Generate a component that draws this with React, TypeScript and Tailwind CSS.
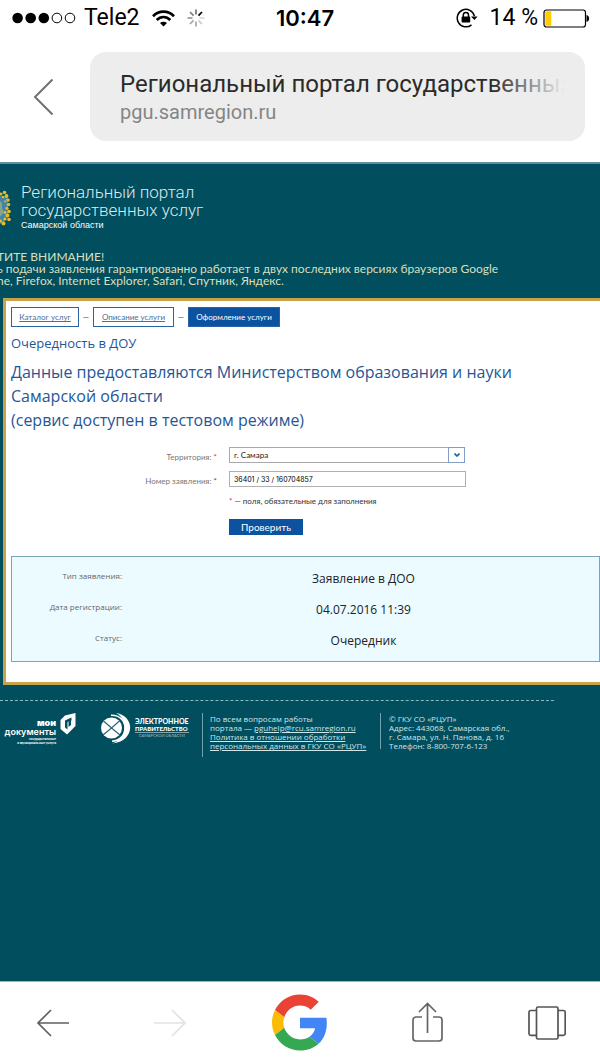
import { useState } from "react";

const STEPS = [
  { label: "Каталог услуг", width: "w-[68px]", current: false },
  { label: "Описание услуги", width: "w-[81px]", current: false },
  { label: "Оформление услуги", width: "w-[92px]", current: true },
];

const RESULT = [
  { label: "Тип заявления:", value: "Заявление в ДОО" },
  { label: "Дата регистрации:", value: "04.07.2016 11:39" },
  { label: "Статус:", value: "Очередник" },
];

const SPOKES = [
  { angle: 0, opacity: 0.55 }, { angle: 45, opacity: 1 }, { angle: 90, opacity: 0.15 }, { angle: 135, opacity: 0.2 },
  { angle: 180, opacity: 0.35 }, { angle: 225, opacity: 0.35 }, { angle: 270, opacity: 0.4 }, { angle: 315, opacity: 0.5 },
];

function StatusBar() {
  return (
    <div className="grid h-9 grid-cols-[1fr_auto_1fr] items-center pl-3 pr-[10px] font-['Inter',sans-serif] text-[22px] leading-9 text-black">
      <div className="flex items-center">
        <svg width="64" height="12" viewBox="0 0 64 12">
          {[0, 1, 2, 3, 4].map(i => (
            <circle key={i} cx={5.6 + i * 13.1} cy="6" r={i < 3 ? 5.3 : 4.8} fill={i < 3 ? "#000" : "none"} stroke={i < 3 ? "none" : "#000"} strokeWidth="1" />
          ))}
        </svg>
        <span className="ml-2 font-['Roboto',sans-serif] text-[23px]">Tele2</span>
        <svg className="ml-3" width="23" height="17" viewBox="0 0 23 17" fill="none" stroke="#000" strokeWidth="2.7">
          <path d="M1 6.2C7 .2 16 .2 22 6.2" />
          <path d="M4.7 10C8.700 6 14.300 6 18.300 10" />
          <path d="M11.500 16.500L8 13c2-1.800 5-1.800 7 0z" fill="#000" stroke="none" />
        </svg>
        <svg className="ml-3" width="18" height="18" viewBox="0 0 18 18" stroke="#000" strokeWidth="1.7">
          {SPOKES.map(s => (
            <line key={s.angle} x1="9" y1="0.5" x2="9" y2="5.5" opacity={s.opacity} transform={`rotate(${s.angle} 9 9)`} />
          ))}
        </svg>
      </div>
      <span className="pl-2 font-semibold">10:47</span>
      <div className="flex items-center justify-end">
        <svg width="22" height="20" viewBox="0 0 22 20" fill="none" stroke="#000" strokeWidth="1.5">
          <path d="M15.500 16.800A8.700 8.700 0 1 1 18.400 8" />
          <path d="M15 8.500h6.600L18.400 12z" fill="#000" stroke="none" />
          <rect x="5.600" y="8.600" width="8.600" height="6" rx="0.8" fill="#000" stroke="none" />
          <path d="M7.300 9V7a2.600 2.600 0 0 1 5.200 0v2" />
        </svg>
        <span className="ml-3 font-['Roboto',sans-serif] text-[23px]">14 %</span>
        <svg className="ml-1" width="48" height="19" viewBox="0 0 48 19">
          <rect x="2" y="1" width="41.500" height="17" rx="2.500" fill="none" stroke="#000" strokeWidth="1.200" />
          <path d="M44.500 6c3.500.6 3.500 6.400 0 7z" fill="#000" />
          <rect x="3.300" y="2.300" width="6" height="14.400" rx="1" fill="#fc0" />
        </svg>
      </div>
    </div>
  );
}

function AddressBar() {
  return (
    <div className="flex items-center pb-[21px] pl-8 pr-[15px] pt-4">
      <button aria-label="Назад" className="mr-9">
        <svg width="22" height="38" viewBox="0 0 22 38" fill="none" stroke="#707070" strokeWidth="2">
          <path d="M20.500 1.500L3 19l17.500 17.500" />
        </svg>
      </button>
      <div className="h-[89px] min-w-0 flex-1 rounded-2xl bg-[#ededed] pl-[30px] pr-5 pt-4 font-['Roboto',sans-serif]">
        <div className="relative overflow-hidden whitespace-nowrap text-2xl leading-8 text-[#2b2b2b]">
          Региональный портал государственных
          <div className="absolute inset-y-0 right-0 w-[72px] bg-linear-to-r from-[#ededed]/0 to-[#ededed]" />
        </div>
        <div className="text-xl leading-6 text-[#858585]">pgu.samregion.ru</div>
      </div>
    </div>
  );
}

function SiteHeader() {
  return (
    <header className="pt-[19px]">
      <div className="flex items-start">
        <svg className="mt-[7px]" width="11" height="37" viewBox="0 0 11 37">
          <path d="M0 6h4l4 3v18l-4 5-4 2z" fill="#3f86a5" />
          <path d="M0 11l2 2v5l2 4-4 5z" fill="#8aa18a" />
          <g fill="#e5bb32">
            <circle cx="4.500" cy="2.500" r="1.800" /><circle cx="6.500" cy="6" r="1.900" /><circle cx="3" cy="7" r="1.300" />
            <circle cx="8" cy="10" r="1.800" /><circle cx="5" cy="11.500" r="1" /><circle cx="8.500" cy="14.500" r="1.800" />
            <circle cx="7" cy="18.500" r="1.700" /><circle cx="9" cy="21.500" r="1.800" /><circle cx="5" cy="22.500" r="1.400" />
            <circle cx="7.500" cy="25.500" r="1.900" /><circle cx="9" cy="29.500" r="1.800" /><circle cx="5" cy="29" r="1.600" />
            <circle cx="3.500" cy="33.500" r="2" /><circle cx="0.500" cy="31" r="1.600" /><circle cx="1" cy="4" r="1.500" />
          </g>
          <path d="M7 12.500l1 1M6 20l2 .5M6 27.500l1.500 1M8 8l1 .5" stroke="#8a5a1c" strokeWidth=".8" />
        </svg>
        <a href="#" className="ml-[10px] block text-[#dcebed]">
          <span className="block font-['Roboto',sans-serif] text-[17px] font-light leading-[18px]">Региональный портал<br />государственных услуг</span>
          <span className="block font-['Liberation_Sans',sans-serif] text-[9px] leading-3 text-white">Самарской области</span>
        </a>
      </div>
      <p className="-ml-[3px] mt-5 whitespace-nowrap font-['Lato','Noto_Sans',sans-serif] text-xs leading-3 text-[#d9dfbd]">
        ТИТЕ ВНИМАНИЕ!<br />
        ь подачи заявления гарантированно работает в двух последних версиях браузеров Google<br />
        ne, Firefox, Internet Explorer, Safari, Спутник, Яндекс.
      </p>
    </header>
  );
}

function RequestForm() {
  const [territory, setTerritory] = useState("samara");
  const [num, setNum] = useState("36401 / 33 / 160704857");
  return (
    <form className="mt-[15px] font-['Lato','Noto_Sans',sans-serif] text-[8px]" onSubmit={e => e.preventDefault()}>
      <div className="grid grid-cols-[206px_237px] gap-x-3 gap-y-2">
        <label htmlFor="territory" className="pt-1 text-right leading-3 text-[#777]">Территория: <span className="text-[#d33]">*</span></label>
        <div className="relative h-4">
          <select id="territory" value={territory} onChange={e => setTerritory(e.target.value)}
            className="block h-4 w-[236px] appearance-none border border-[#a9a9a9] bg-white pl-1 text-[8px] leading-3 text-[#222]">
            <option value="samara">г. Самара</option>
          </select>
          <span className="pointer-events-none absolute right-px top-0 flex h-4 w-[17px] items-center justify-center border border-[#7f9fc6] bg-white">
            <svg width="6" height="4" viewBox="0 0 6 4" fill="none" stroke="#17609b" strokeWidth="1.600"><path d="M.5.5L3 3 5.500.5" /></svg>
          </span>
        </div>
        <label htmlFor="num" className="pt-1 text-right leading-3 text-[#777]">Номер заявления: <span className="text-[#833]">*</span></label>
        <input id="num" value={num} onChange={e => setNum(e.target.value)}
          className="h-4 border border-[#b0b0b0] bg-white pl-1 font-['Inter',sans-serif] text-[7px] text-black" />
      </div>
      <div className="ml-[218px]">
        <p className="mt-2 leading-3 text-[#333]"><span className="text-[#d33]">*</span> — поля, обязательные для заполнения</p>
        <button className="mt-3 block h-4 w-[74px] bg-[#0b52a0] text-[10px] leading-4 text-white">Проверить</button>
      </div>
    </form>
  );
}

function SiteFooter() {
  return (
    <footer className="mt-[15px] font-['Open_Sans',sans-serif] text-[8px] leading-[9px] text-[#cfe6ea]">
      <div className="mr-[46px] border-t border-dashed border-[#8fb9c0]" />
      <div className="flex items-start pt-3">
        <a href="#" className="flex w-[100px] shrink-0 items-start pl-[2px] text-white">
          <span className="w-[54px] pt-[6px] text-right font-['Inter',sans-serif]">
            <span className="block text-[9px] font-black leading-[8px]">мои</span>
            <span className="block text-[9px] font-semibold leading-[9px]">документы</span>
            <span className="mt-px block whitespace-nowrap text-[3px] font-bold leading-[4px]">государственные<br />и муниципальные услуги</span>
          </span>
          <svg className="ml-1" width="16" height="22" viewBox="0 0 16 22">
            <path fillRule="evenodd" d="M5 2.500L15.500 0v13L7 21.500.5 16V7zM5 7.500v7l2.500 2V9l4-1.500V4.500z" fill="#fff" />
            <path d="M8.500 6.500l2.500-1v6.500l-2.500 2z" fill="#004e5e" />
          </svg>
        </a>
        <a href="#" className="flex w-[102px] shrink-0 items-start text-white">
          <svg width="33" height="31" viewBox="0 0 33 31" fill="none">
            <circle cx="11.500" cy="15" r="10.500" fill="#fff" />
            <path d="M3.500 8l8 7 8-7M3 22l8.500-7 8.500 7" stroke="#2b6572" strokeWidth="1.200" />
            <path d="M11 2.300C20 2 25 8 25 15s-5 13-13 13.300" stroke="#fff" strokeWidth="1.600" />
            <path d="M16 0c20 3 19 29-4 30.500 14-4 18-23 4-30.500z" fill="#fff" />
          </svg>
          <span className="ml-[2px] pt-[5px] font-['Lato',sans-serif]">
            <span className="block text-[7px] font-black leading-[7px]">ЭЛЕКТРОННОЕ</span>
            <span className="block border-b border-white/50 text-[6px] font-black leading-[7px]">ПРАВИТЕЛЬСТВО</span>
            <span className="block text-center text-[4px] leading-[6px] opacity-60">САМАРСКОЙ ОБЛАСТИ</span>
          </span>
        </a>
        <div className="h-11 w-[178px] shrink-0 whitespace-nowrap border-l border-[#6fa2ab] pl-[7px] pt-px">
          По всем вопросам работы<br />
          портала — <a href="mailto:pguhelp@rcu.samregion.ru" className="underline">pguhelp@rcu.samregion.ru</a><br />
          <a href="#" className="underline">Политика в отношении обработки<br />персональных данных в ГКУ СО «РЦУП»</a>
        </div>
        <address className="h-9 whitespace-nowrap border-l border-[#6fa2ab] pl-2 pt-px not-italic">
          © ГКУ СО «РЦУП»<br />Адрес: 443068, Самарская обл.,<br />г. Самара, ул. Н. Панова, д. 16<br />Телефон: 8-800-707-6-123
        </address>
      </div>
    </footer>
  );
}

function Toolbar() {
  return (
    <nav className="flex h-[82px] items-center justify-between border-t border-[#9bb4ba] bg-white pl-9 pr-[34px]">
      <button aria-label="Назад">
        <svg width="33" height="28" viewBox="0 0 33 28" fill="none" stroke="#606060" strokeWidth="1.700"><path d="M33 14H2M15 1L2 14l13 13" /></svg>
      </button>
      <button aria-label="Вперёд" disabled>
        <svg width="33" height="28" viewBox="0 0 33 28" fill="none" stroke="#e2e2e2" strokeWidth="1.700"><path d="M0 14h31M18 1l13 13-13 13" /></svg>
      </button>
      <button aria-label="Google">
        <svg width="56" height="57" viewBox="0 0 48 48">
          <path fill="#EA4335" d="M24 9.500c3.540 0 6.710 1.220 9.210 3.600l6.850-6.850C35.900 2.380 30.470 0 24 0 14.620 0 6.510 5.380 2.560 13.220l7.980 6.190C12.430 13.720 17.740 9.500 24 9.500z" />
          <path fill="#4285F4" d="M46.980 24.550c0-1.570-.15-3.090-.38-4.550H24v9.020h12.940c-.58 2.960-2.260 5.480-4.780 7.180l7.730 6c4.510-4.180 7.090-10.360 7.090-17.650z" />
          <path fill="#FBBC05" d="M10.530 28.590c-.48-1.450-.76-2.990-.76-4.590s.27-3.140.76-4.590l-7.980-6.190C.92 16.460 0 20.120 0 24c0 3.880.92 7.540 2.560 10.780l7.970-6.190z" />
          <path fill="#34A853" d="M24 48c6.480 0 11.930-2.130 15.890-5.810l-7.730-6c-2.150 1.450-4.920 2.300-8.160 2.300-6.260 0-11.570-4.220-13.470-9.910l-7.980 6.190C6.510 42.620 14.620 48 24 48z" />
        </svg>
      </button>
      <button aria-label="Поделиться">
        <svg width="31" height="41" viewBox="0 0 31 41" fill="none" stroke="#666" strokeWidth="1.700">
          <path d="M10 15H4a3 3 0 0 0-3 3v18a3 3 0 0 0 3 3h23a3 3 0 0 0 3-3V18a3 3 0 0 0-3-3h-6M15.500 31V2M7 10l8.500-8.500L24 10" />
        </svg>
      </button>
      <button aria-label="Вкладки">
        <svg width="38" height="34" viewBox="0 0 38 34" fill="none" stroke="#555" strokeWidth="1.700">
          <rect x="8.500" y="1" width="21.500" height="32" rx="1.500" />
          <path d="M8.500 4.500H3A1.800 1.800 0 0 0 1 6.300v21.200A1.800 1.800 0 0 0 3 29.300h5.500M30 4.500h5.500A1.800 1.800 0 0 1 37.200 6.300v21.200a1.800 1.800 0 0 1-1.800 1.800H30" />
        </svg>
      </button>
    </nav>
  );
}

export default function App() {
  return (
    <div className="flex min-h-screen flex-col overflow-hidden bg-white">
      <StatusBar />
      <AddressBar />

      <div className="flex-1 border-t-2 border-[#5f909b] bg-[#004e5e]">
        <SiteHeader />

        {/* Service card, runs past the right edge */}
        <main className="ml-[3px] mt-[11px] border-y-[3px] border-l-[3px] border-[#c9a24c] bg-white pb-5 pl-[5px] pt-[6px] font-['Open_Sans',sans-serif] text-[#1f5796]">
          <nav className="flex items-center font-['Lato','Noto_Sans',sans-serif] text-[8px] text-[#444]">
            {STEPS.map((s, i) => (
              <div key={s.label} className="flex items-center">
                {i > 0 && <span className="w-[14px] text-center leading-5">—</span>}
                <a href="#" className={`${s.width} h-5 border border-[#2a62a5] text-center leading-[18px] whitespace-nowrap ${s.current ? "bg-[#0b52a0] text-white" : "bg-white text-[#4b6d9c] underline"}`}>
                  {s.label}
                </a>
              </div>
            ))}
          </nav>
          <h2 className="mt-2 text-[13px] leading-4">Очередность в ДОУ</h2>
          <h1 className="mt-[9px] text-base leading-6">
            Данные предоставляются Министерством образования и науки<br />Самарской области<br />(сервис доступен в тестовом режиме)
          </h1>
          <RequestForm />
          <dl className="mt-[21px] border border-[#7ba3bd] bg-[#ebfbff] pb-[3px] pt-2">
            {RESULT.map(r => (
              <div key={r.label} className="grid h-[31px] grid-cols-[110px_1fr] gap-x-[6px]">
                <dt className="pt-[3px] text-right text-[8px] leading-4 text-[#666]">{r.label}</dt>
                <dd className="pt-[6px] text-center text-xs leading-4 text-[#222]">{r.value}</dd>
              </div>
            ))}
          </dl>
        </main>

        <SiteFooter />
      </div>

      <Toolbar />
    </div>
  );
}
